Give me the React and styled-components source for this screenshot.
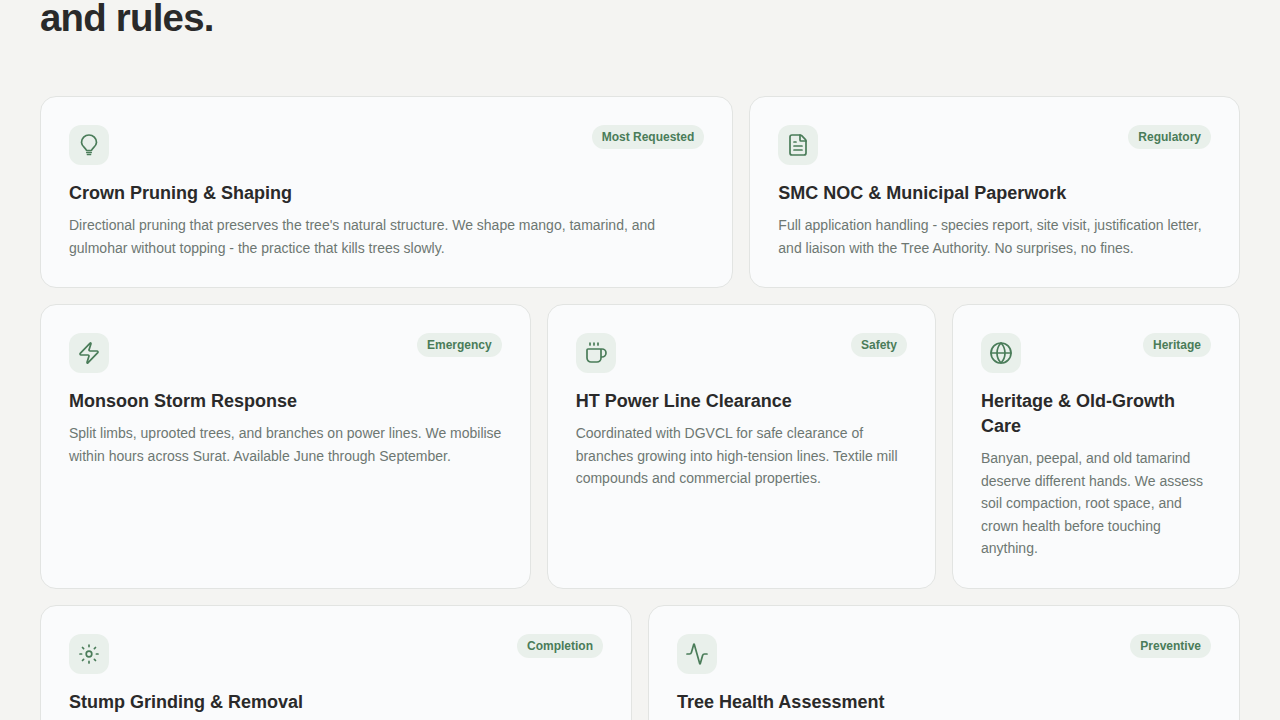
import styled, { createGlobalStyle } from "styled-components";
import { FileText, Zap, Coffee, Globe, Activity } from "lucide-react";

const GlobalStyle = createGlobalStyle`
  html, body {
    margin: 0;
    height: 720px;
    overflow: hidden;
    background: #f4f4f2;
  }
  * {
    box-sizing: border-box;
  }
`;

const Page = styled.div`
  padding: 0 40px;
  font-family: "Liberation Sans", Arial, sans-serif;
`;

const Heading = styled.h2`
  margin: 0 0 60px;
  font-size: 38.4px;
  line-height: 36px;
  font-weight: 700;
  letter-spacing: -0.02em;
  color: #2a2a2a;
`;

const Grid = styled.div`
  display: grid;
  grid-template-columns: repeat(12, 1fr);
  gap: 16px;
`;

const Card = styled.article`
  grid-column: span ${(p) => p.$span};
  padding: 28px;
  background: #fafbfc;
  border: 1px solid #e2e4e2;
  border-radius: 16px;
`;

const CardTop = styled.div`
  display: flex;
  justify-content: space-between;
  align-items: flex-start;
  margin-bottom: 16px;
`;

const IconBox = styled.div`
  width: 40px;
  height: 40px;
  display: flex;
  justify-content: center;
  align-items: center;
  background: #e9f0eb;
  border-radius: 12px;
  color: #4a7c59;
`;

const Badge = styled.span`
  padding: 4px 10px;
  font-size: 12px;
  line-height: 16px;
  font-weight: 700;
  color: #4a7c59;
  background: #e9f0eb;
  border-radius: 999px;
`;

const Title = styled.h3`
  margin: 0 0 8px;
  font-size: 18px;
  line-height: 25px;
  font-weight: 700;
  color: #2a2a2a;
`;

const Description = styled.p`
  margin: 0;
  font-size: 14px;
  line-height: 22.5px;
  color: #6d7772;
`;

const BulbIcon = ({ size, strokeWidth }) => (
  <svg width={size} height={size} viewBox="0 0 24 24" fill="none" stroke="currentColor" strokeWidth={strokeWidth} strokeLinecap="round" strokeLinejoin="round">
    <path d="M9.5 17.5C9.2 15 4.5 13.5 4.5 9.5a7.5 7.5 0 0 1 15 0c0 4-4.7 5.5-5 8Z" />
    <path d="M9.8 19.5h4.4" />
    <path d="M10.5 21.5h3" />
  </svg>
);

const RaysIcon = ({ size, strokeWidth }) => (
  <svg width={size} height={size} viewBox="0 0 24 24" fill="none" stroke="currentColor" strokeWidth={strokeWidth} strokeLinecap="round" strokeLinejoin="round">
    <circle cx="12" cy="12" r="2.8" />
    <path d="M12 3v1.6M12 19.4V21M3 12h1.6M19.4 12H21" />
    <path d="M5.5 5.5l1.1 1.1M17.4 17.4l1.1 1.1M5.5 18.5l1.1-1.1M17.4 6.6l1.1-1.1" />
  </svg>
);

const services = [
  {
    span: 7,
    Icon: BulbIcon,
    badge: "Most Requested",
    title: "Crown Pruning & Shaping",
    text: "Directional pruning that preserves the tree's natural structure. We shape mango, tamarind, and gulmohar without topping - the practice that kills trees slowly.",
  },
  {
    span: 5,
    Icon: FileText,
    badge: "Regulatory",
    title: "SMC NOC & Municipal Paperwork",
    text: "Full application handling - species report, site visit, justification letter, and liaison with the Tree Authority. No surprises, no fines.",
  },
  {
    span: 5,
    Icon: Zap,
    badge: "Emergency",
    title: "Monsoon Storm Response",
    text: "Split limbs, uprooted trees, and branches on power lines. We mobilise within hours across Surat. Available June through September.",
  },
  {
    span: 4,
    Icon: Coffee,
    badge: "Safety",
    title: "HT Power Line Clearance",
    text: "Coordinated with DGVCL for safe clearance of branches growing into high-tension lines. Textile mill compounds and commercial properties.",
  },
  {
    span: 3,
    Icon: Globe,
    badge: "Heritage",
    title: "Heritage & Old-Growth Care",
    text: "Banyan, peepal, and old tamarind deserve different hands. We assess soil compaction, root space, and crown health before touching anything.",
  },
  { span: 6, Icon: RaysIcon, badge: "Completion", title: "Stump Grinding & Removal" },
  { span: 6, Icon: Activity, badge: "Preventive", title: "Tree Health Assessment" },
];

const App = () => (
  <Page>
    <GlobalStyle />
    <Heading>and rules.</Heading>
    <Grid>
      {services.map(({ span, Icon, badge, title, text }) => (
        <Card key={title} $span={span}>
          <CardTop>
            <IconBox>
              <Icon size={24} strokeWidth={1.7} />
            </IconBox>
            <Badge>{badge}</Badge>
          </CardTop>
          <Title>{title}</Title>
          {text && <Description>{text}</Description>}
        </Card>
      ))}
    </Grid>
  </Page>
);

export default App;
